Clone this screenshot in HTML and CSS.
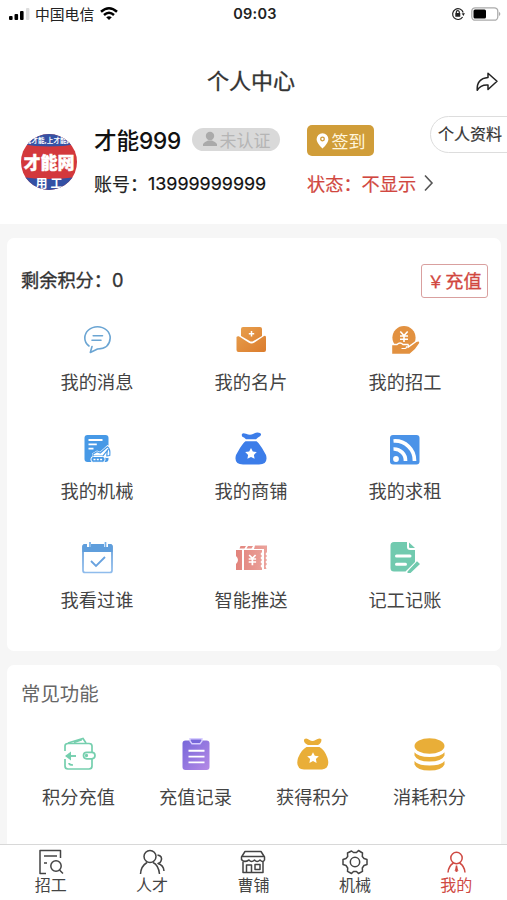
FILE: index.html
```html
<!DOCTYPE html>
<html lang="zh-CN">
<head>
<meta charset="utf-8">
<meta name="viewport" content="width=device-width, initial-scale=1">
<title>个人中心</title>
<link rel="stylesheet" href="styles.css">
</head>
<body>
<svg class="defs" width="0" height="0" aria-hidden="true">
  <defs>
    <linearGradient id="orange" x1="0" y1="0" x2="1" y2="1"><stop offset="0" stop-color="#e8a04e"/><stop offset="1" stop-color="#db7c2d"/></linearGradient>
    <linearGradient id="purple" x1="0" y1="0" x2="1" y2="1"><stop offset="0" stop-color="#7767da"/><stop offset="1" stop-color="#b58ae6"/></linearGradient>
    <linearGradient id="salmon" x1="0" y1="0" x2="1" y2="0"><stop offset="0" stop-color="#e2837c"/><stop offset="1" stop-color="#eba39c"/></linearGradient>
    <linearGradient id="sky" x1="0" y1="0" x2="0" y2="1"><stop offset="0" stop-color="#5795d6"/><stop offset="1" stop-color="#8fbcec"/></linearGradient>
    <clipPath id="round"><circle cx="28" cy="28" r="28"/></clipPath>
  </defs>
</svg>
<div class="app">
  <header class="top">
    <div class="status">
      <div class="carrier">
        <svg width="21" height="12" viewBox="0 0 21 12"><rect x="0" y="8" width="3.6" height="4" rx="1"/><rect x="5.5" y="6" width="3.6" height="6" rx="1"/><rect x="11" y="3" width="3.6" height="9" rx="1"/><rect x="17" y="0" width="3.4" height="12" rx="1" fill="#ddd"/></svg>
        <span>中国电信</span>
        <svg width="18" height="13" viewBox="0 0 18 13" fill="none" stroke="#000" stroke-width="2.5"><path d="M1 4.7Q9-2.3 17 4.7M4 8Q9 3.6 14 8"/><path d="M9 13 6.2 10.3Q9 8 11.8 10.3Z" fill="#000" stroke="none"/></svg>
      </div>
      <span class="clock">09:03</span>
      <div class="power">
        <svg width="14" height="14" viewBox="0 0 14 14" fill="none" stroke="#222" stroke-width="1.2"><path d="M11.6 10A5.4 5.4 0 1 1 12.2 5.5"/><path d="m10.6 6.5 3.2-.6-1.2 3Z" fill="#222" stroke="none"/><rect x="4.3" y="6" width="5" height="3.8" rx=".5" fill="#222" stroke="none"/><path d="M5.3 6.3V5.2a1.5 1.5 0 0 1 3 0v1"/></svg>
        <svg width="30" height="14" viewBox="0 0 30 14"><rect x=".8" y=".8" width="26" height="12.4" rx="3.5" fill="#fff" stroke="#aaa" stroke-width="1.3"/><rect x="2.5" y="2.5" width="12.5" height="9" rx="1.5"/><path d="M28.2 4.8q2.2 2.2 0 4.4Z" fill="#999"/></svg>
      </div>
    </div>
    <div class="nav">
      <h1>个人中心</h1>
      <svg class="share" width="22" height="20" viewBox="0 0 22 20" fill="none" stroke="#222" stroke-width="1.5" stroke-linejoin="round"><path d="M12 1.2 21 9.2 12 17.5V13Q4.5 12.5 1.2 18.3Q.5 6.5 12 5.5Z"/></svg>
    </div>
    <div class="profile">
      <svg class="avatar" width="56" height="56" viewBox="0 0 56 56">
        <g clip-path="url(#round)"><rect width="56" height="56" fill="#d3383c"/><path d="M0 0H56V10Q28 15 0 10Z" fill="#3552a5"/><path d="M0 56V43Q28 47 56 43V56Z" fill="#3450a4"/>
        <text class="logo-small" x="28" y="9" text-anchor="middle">找才能,上才能网</text><text class="logo-main" x="28" y="34.5" text-anchor="middle">才能网</text><text class="logo-work" x="28" y="54" text-anchor="middle">用&#160;工</text></g>
      </svg>
      <div class="info">
        <div class="line">
          <span class="name">才能999</span>
          <span class="unverified"><svg width="16" height="16" viewBox="0 0 16 16" fill="#aaa"><circle cx="8" cy="5" r="4.2"/><path d="M1 15v-2Q2 11 6 9.5H10Q14 11 15 13v2Z"/></svg>未认证</span>
        </div>
        <div class="line account">账号：<span>13999999999</span></div>
      </div>
      <div class="state">
        <span class="sign"><svg width="13" height="16" viewBox="0 0 13 16"><path d="M6.5 15.5Q.6 10 .6 6.2A5.9 5.9 0 0 1 12.4 6.2Q12.4 10 6.5 15.5Z" fill="#fff"/><circle cx="6.5" cy="6" r="1.8" fill="#fff" stroke="#cf9a36" stroke-width="1.3"/></svg>签到</span>
        <div class="visibility">状态：不显示<svg width="10" height="18" viewBox="0 0 10 18" fill="none" stroke="#555" stroke-width="1.6"><path d="m1 1.5 7 7.5-7 7.5"/></svg></div>
      </div>
      <span class="details">个人资料</span>
    </div>
  </header>

  <main>
    <section class="card services">
      <div class="balance"><span class="points">剩余积分：0</span><span class="recharge"><i>￥</i><b>充值</b></span></div>
      <div class="grid three">
        <div class="item"><svg viewBox="0 0 32 32" fill="none" stroke="#6ba5d3" stroke-width="1.6" stroke-linecap="round" stroke-linejoin="round"><path d="M8 22Q3.7 18.7 3.8 14A12.7 11.3 0 0 1 29.2 14Q28.5 25 16.5 25L9.3 28.5 11 22.5M12.2 11.8H21.5M11 16.2H20"/></svg><span>我的消息</span></div>
        <div class="item"><svg viewBox="0 0 32 32" fill="url(#orange)"><path d="M6 12V5Q6 3 8 3H25Q27 3 27 5V12L17.5 17.5H15.5ZM1.5 13Q2 12 3.8 12.2L13.5 18.6Q16.5 20.5 19.5 18.6L29 12Q31 11 31 13.5V26Q31 28 29 28H3.5Q1.5 28 1.5 26Z"/><path d="M16.5 7V12.4M13.8 9.7H19.2" stroke="#fff" stroke-width="1.5"/></svg><span>我的名片</span></div>
        <div class="item"><svg viewBox="0 0 32 32" fill="#e29140"><circle cx="15" cy="13.6" r="11.6"/><path d="M2.5 20.5H8Q11 17.5 14 20.5H19Q20 22 18.5 23.6L27 17.5Q30.5 15.5 31 19Q27 26 21 30.4H2.5Z" stroke="#fff" stroke-width="1.4"/><path d="M12.5 24.5H16Q18 24 17.3 22.3" fill="none" stroke="#fff" stroke-width="1.1"/><path d="m11.3 7.5 3.7 4 3.7-4M11 12h8M11 15.2h8M15 12v6" fill="none" stroke="#fff" stroke-width="1.6"/></svg><span>我的招工</span></div>
        <div class="item"><svg viewBox="0 0 32 32"><rect x="3.5" y="2" width="24" height="27" rx="3" fill="#4799e6"/><path d="M7.5 7h14M7.5 11.3h8.3M7.5 15.6h5" stroke="#fff" stroke-width="1.8"/><path d="M11 23V20.5L16 17.5 19 18.7 26.5 12 30.5 14V24.5L26 25Z" fill="#fff"/><path d="M12 23V21L16 18.8 19.3 20 26.5 13.8Q29.5 16 28.8 22.5L25.8 23Q25.5 19 27 16.5L22 22.8Z" fill="#fff" stroke="#4799e6" stroke-width="1.2" stroke-linejoin="round"/><rect x="10" y="23.5" width="14" height="5.8" rx="2.4" fill="#4799e6" stroke="#fff"/><path d="M12.5 26.4h9" stroke="#fff" stroke-width="1.5" stroke-dasharray="2 1.3"/></svg><span>我的机械</span></div>
        <div class="item"><svg viewBox="0 0 32 32" fill="#3c7de9"><path d="M7 1Q8-.5 11 .8Q15 2.5 18 1Q22-1.5 25 0Q28 2 23 4.6L21 6.2H11L9 4.6Q6 3.5 7 1ZM10.5 8.2H21.5Q23 9 27 15L31 22Q33.5 31 24 31.5H8Q-1.5 31 1 22L5 15Q9 8.8 10.5 8.2Z"/><path d="m16 15 1.8 3.5 4 .6-2.9 2.8.7 3.9L16 24l-3.6 1.8.7-3.9-2.9-2.8 4-.6Z" fill="#fff"/></svg><span>我的商铺</span></div>
        <div class="item"><svg viewBox="0 0 32 32"><rect x="1" y="2" width="29.5" height="29.5" rx="3" fill="#4b93e8"/><circle cx="7" cy="26" r="2.9" fill="#fff"/><path d="M4.5 16A11.5 11.5 0 0 1 16.5 28M4.5 8A19.5 19.5 0 0 1 25.5 28" fill="none" stroke="#fff" stroke-width="3.7"/></svg><span>我的求租</span></div>
        <div class="item"><svg viewBox="0 0 32 32"><rect x="2" y="3" width="29" height="27.5" rx="2" fill="#fff" stroke="url(#sky)" stroke-width="1.7"/><path d="M1.5 10V4Q1.5 2 3.5 2H29.5Q31.5 2 31.5 4V10Z" fill="#5f9edc"/><path d="M8 0v5M25 0v5" stroke="#fff" stroke-width="4"/><path d="M9 0v5M24.5 0v5" stroke="#75afe8" stroke-width="1.7"/><path d="m10 19 5 5 9-9" fill="none" stroke="#68a2df" stroke-width="1.8"/></svg><span>我看过谁</span></div>
        <div class="item"><svg viewBox="0 0 32 32" fill="url(#salmon)"><path d="M1 8H7V28H1V22Q5 18 1 14ZM5.5 4H11L9.5 6.5H4.5ZM13 4H18L16.5 6.5H11.5ZM20 3.5H32V10L30.5 12 32 14 30.5 16 32 18 30.5 20 32 22 30.5 24 31.5 27H29V7H19ZM9 8H27V10L25.5 12 27 14 25.5 16 27 18 25.5 20 27 22 25.5 24 27 26V28H9Z"/><path d="m14.2 13 3.2 3.4 3.2-3.4M13.7 17h7.4M13.7 20h7.4M17.4 16.4V23.2" fill="none" stroke="#fff" stroke-width="1.7"/></svg><span>智能推送</span></div>
        <div class="item"><svg viewBox="0 0 32 32"><path d="M5 0H18V5Q18 8 21 8H26V20L16.5 29.5H5Q1.5 29.5 1.5 26V3.5Q1.5 0 5 0ZM20 .5 26 6H21Q20 6 20 5ZM18.5 29.5 28 19.3 31 22 21.5 31H18.5Z" fill="#71caaf"/><path d="M7.5 14H21M7.5 22.3H16.5" stroke="#fff" stroke-width="3" stroke-linecap="round"/></svg><span>记工记账</span></div>
      </div>
    </section>

    <section class="card common">
      <h2>常见功能</h2>
      <div class="grid four">
        <div class="item"><svg viewBox="0 0 32 32" fill="none" stroke="#75cfae" stroke-width="1.7"><path d="M5 4 20-.5 23 4M11 3.5 18.8.8"/><path d="M2 12V7Q2 4.5 5 4.5H26Q29 4.5 29 7V13M2 20V27Q2 30 5 30H26Q29 30 29 27V20"/><path d="M13 17H3" stroke-width="1.9"/><path d="M8 12.5 2 17 8 21.5Z" fill="#75cfae" stroke="none"/><path d="M6 24Q6 26 10 26"/><rect x="20.5" y="13.3" width="11.5" height="6.5" rx="3.2"/><circle cx="23.5" cy="16.5" r=".8" fill="#75cfae"/></svg><span>积分充值</span></div>
        <div class="item"><svg viewBox="0 0 32 32"><rect x="2.5" y="1.5" width="27" height="29.5" rx="3" fill="url(#purple)"/><path d="M10-.3H22V2L20 4.8H12L10 2Z" fill="#7767da" stroke="#d8ceff" stroke-width="1.4"/><path d="M8.5 11.8H24.5M8.5 17.6H24.5M8.5 23.4H24.5" stroke="#fff" stroke-width="1.9"/></svg><span>充值记录</span></div>
        <div class="item"><svg viewBox="0 0 32 32" fill="#e9ae38"><path d="M7.5 0Q9.5-1.5 12.5 1Q15.5 3 18.5 1Q22.5-1.8 24.5 .4Q24.5 4 21 6H11Q6.5 4 7 1ZM9.5 8H22.5Q27.5 10.5 30.5 19Q33.5 29.5 25 30.5H7Q-2 29.5 1 19Q4.5 10.5 9.5 8Z"/><path d="m16 13.2 1.8 3.5 4 .6-2.9 2.8.7 3.9-3.6-1.9-3.6 1.9.7-3.9-2.9-2.8 4-.6Z" fill="#fff"/></svg><span>获得积分</span></div>
        <div class="item"><svg viewBox="0 0 32 32" fill="#e9ae38"><path d="M.5 22V25.5Q3 31.5 15.5 31.5T30.5 25.5V22Q27 26.5 15.5 26.5T.5 22ZM.5 13.2V16.5Q3 22.5 15.5 22.5T30.5 16.5V13.2Q27 18 15.5 18T.5 13.2Z"/><ellipse cx="15.5" cy="7" rx="15" ry="7.7"/></svg><span>消耗积分</span></div>
      </div>
    </section>
  </main>

  <nav class="tabs">
    <div class="tab"><svg viewBox="0 0 28 28"><path d="M9 25.5H3V2.5H23.5V10M7 8H20M7 15H10"/><circle cx="19" cy="18" r="5.2"/><path d="m22.5 22 3.5 3.5"/></svg><span>招工</span></div>
    <div class="tab"><svg viewBox="0 0 28 28"><circle cx="12" cy="8.5" r="6"/><path d="M2.5 26Q3 18 9 14.5M15 14.5Q20.5 17 21.5 26M19.5 7Q25 8 23 13Q22.5 15 20 15.5Q25.5 17 26 23"/></svg><span>人才</span></div>
    <div class="tab"><svg viewBox="0 0 28 28"><path d="M6 3.5H22L25.5 9V12Q24 15 21 12Q18 15 15.5 12Q12.5 15 10 12Q5 15 2.5 11.5V9ZM4 14V24.5H24V14M3.5 8.5H24.5M7.5 24V17H12.5V24M16 16.5H21V21.5H16Z"/></svg><span>曹铺</span></div>
    <div class="tab"><svg viewBox="0 0 28 28"><path d="M10.5 3 12.5 4.5H15.5L17.5 2.5 21.5 5 21.3 8.5 23 10.5 26 11.5V16.5L23 17.5 21.3 20 21.5 23.3 17.5 25.5 15.5 23.5H12.5L10.5 25.5 6.5 23.3 6.7 20 5 17.5 2 16.5V11.5L5 10.5 6.7 8.5 6.5 5Z"/><circle cx="14" cy="14" r="4.7"/></svg><span>机械</span></div>
    <div class="tab active"><svg viewBox="0 0 28 28"><circle cx="14.5" cy="10" r="5.7"/><path d="M6 24.5Q6.5 18 11.5 15M17.5 15Q22.5 18 23 24.5M14.5 17.5V20"/><path d="m14.5 18 1.3 4.5-1.3 1.5-1.3-1.5Z" fill="#cf4a43" stroke-width=".8"/></svg><span>我的</span></div>
  </nav>
</div>
</body>
</html>
```
FILE: styles.css
```css
* { box-sizing: border-box; margin: 0; padding: 0; }
body {
  background: #f6f6f6;
  color: #333;
  font-family: Inter, "Noto Sans CJK SC", sans-serif;
}
svg { display: block; flex: none; overflow: visible; }
.defs { position: absolute; }
.app { display: flex; flex-direction: column; width: 507px; height: 900px; overflow: hidden; }

.top { flex: none; height: 224px; background: #fff; }
.status {
  display: grid;
  grid-template-columns: 1fr auto 1fr;
  align-items: center;
  height: 27px;
  padding: 0 6px 0 9px;
  color: #222;
  font-size: 14.8px;
}
.carrier { display: flex; align-items: center; gap: 5px; }
.carrier svg:last-child { margin-left: 1px; }
.clock { font-size: 14.5px; font-weight: 600; letter-spacing: .2px; }
.power { display: flex; align-items: center; justify-content: flex-end; gap: 6px; }
.nav {
  display: grid;
  grid-template-columns: 1fr auto 1fr;
  align-items: center;
  height: 77px;
  padding: 31px 9px 0 4px;
}
.nav h1 { grid-column: 2; color: #333; font-size: 22px; font-weight: 400; line-height: 46px; -webkit-text-stroke: .35px #333; }
.share { justify-self: end; margin-top: 2px; }

.profile { display: flex; height: 120px; }
.avatar { margin: 30px 0 0 21px; }
.logo-small { font-size: 6.6px; font-weight: 700; fill: #fff; }
.logo-main { font-size: 17px; font-weight: 900; fill: #fff; stroke: #fff; stroke-width: .4px; }
.logo-work { font-size: 12px; font-weight: 700; fill: #fff; }
.info { flex: none; width: 229px; padding: 13px 0 0 17px; }
.line { display: flex; align-items: center; height: 44px; white-space: nowrap; }
.name { width: 98px; color: #111; font-size: 22.6px; font-weight: 500; letter-spacing: -.15px; }
.unverified {
  display: flex;
  align-items: center;
  justify-content: center;
  gap: 2px;
  width: 88px;
  height: 23px;
  border-radius: 12px;
  background: #d9d9d9;
  color: #b5b5b5;
  font-size: 17px;
}
.account { color: #222; font-size: 18px; -webkit-text-stroke: .2px; }
.account span { color: #111; font-size: 17.9px; }
.state { flex: none; width: 124px; padding: 21px 0 0 1px; }
.sign {
  display: flex;
  align-items: center;
  justify-content: center;
  gap: 3px;
  width: 67px;
  height: 31px;
  border-radius: 5px;
  background: #d09d39;
  color: #fff5dc;
  font-size: 17px;
}
.visibility { display: flex; align-items: center; height: 54px; color: #d14740; font-size: 18.2px; white-space: nowrap; -webkit-text-stroke: .2px; }
.visibility svg { margin-left: 8px; }
.details {
  flex: none;
  width: 96px;
  height: 37px;
  margin-top: 12px;
  padding-left: 7px;
  border: 1px solid #ddd;
  border-radius: 19px 0 0 19px;
  font-size: 16px;
  line-height: 34px;
  -webkit-text-stroke: .2px;
}

main { display: flex; flex-direction: column; gap: 14px; height: 620px; padding: 14px 6px 0 7px; overflow: hidden; }
.card { flex: none; border-radius: 7px; background: #fff; padding: 0 13px 0 14px; }
.services { height: 413px; padding-top: 26px; }
.balance { display: flex; align-items: center; justify-content: space-between; height: 34px; font-size: 18.2px; }
.points { margin-top: -4px; -webkit-text-stroke: .35px #333; }
.recharge {
  display: flex;
  align-items: center;
  justify-content: center;
  width: 67px;
  height: 34px;
  padding-bottom: 2px;
  border: 1px solid #d9a09f;
  border-radius: 3px;
  color: #d14740;
  -webkit-text-stroke: .3px #d14740;
}
.recharge i { width: 17px; margin-right: 1px; font-size: 17px; font-style: normal; }
.recharge b { font-weight: 400; }
.grid { display: grid; margin-left: -1px; }
.three { grid-template-columns: repeat(3, 154px); grid-auto-rows: 109px; padding-top: 26px; }
.four { grid-template-columns: repeat(4, 117px); }
.item { display: flex; flex-direction: column; align-items: center; gap: 11px; color: #444; font-size: 18.2px; line-height: 30px; }
.item svg { width: 32px; height: 32px; }
.common { height: 190px; }
.common h2 { height: 74px; color: #666; font-size: 19.4px; font-weight: 400; line-height: 59px; }

.tabs {
  display: grid;
  grid-template-columns: repeat(5, 1fr);
  height: 56px;
  border-top: 1px solid #d8d8d8;
  background: #fff;
}
.tab { display: flex; flex-direction: column; align-items: center; padding-top: 3px; color: #444; font-size: 16px; line-height: 19px; }
.tab svg { width: 28px; height: 28px; fill: none; stroke: #444; stroke-width: 1.5; stroke-linejoin: round; }
.tab.active { color: #cf4a43; }
.tab.active svg { stroke: #cf4a43; }
```
